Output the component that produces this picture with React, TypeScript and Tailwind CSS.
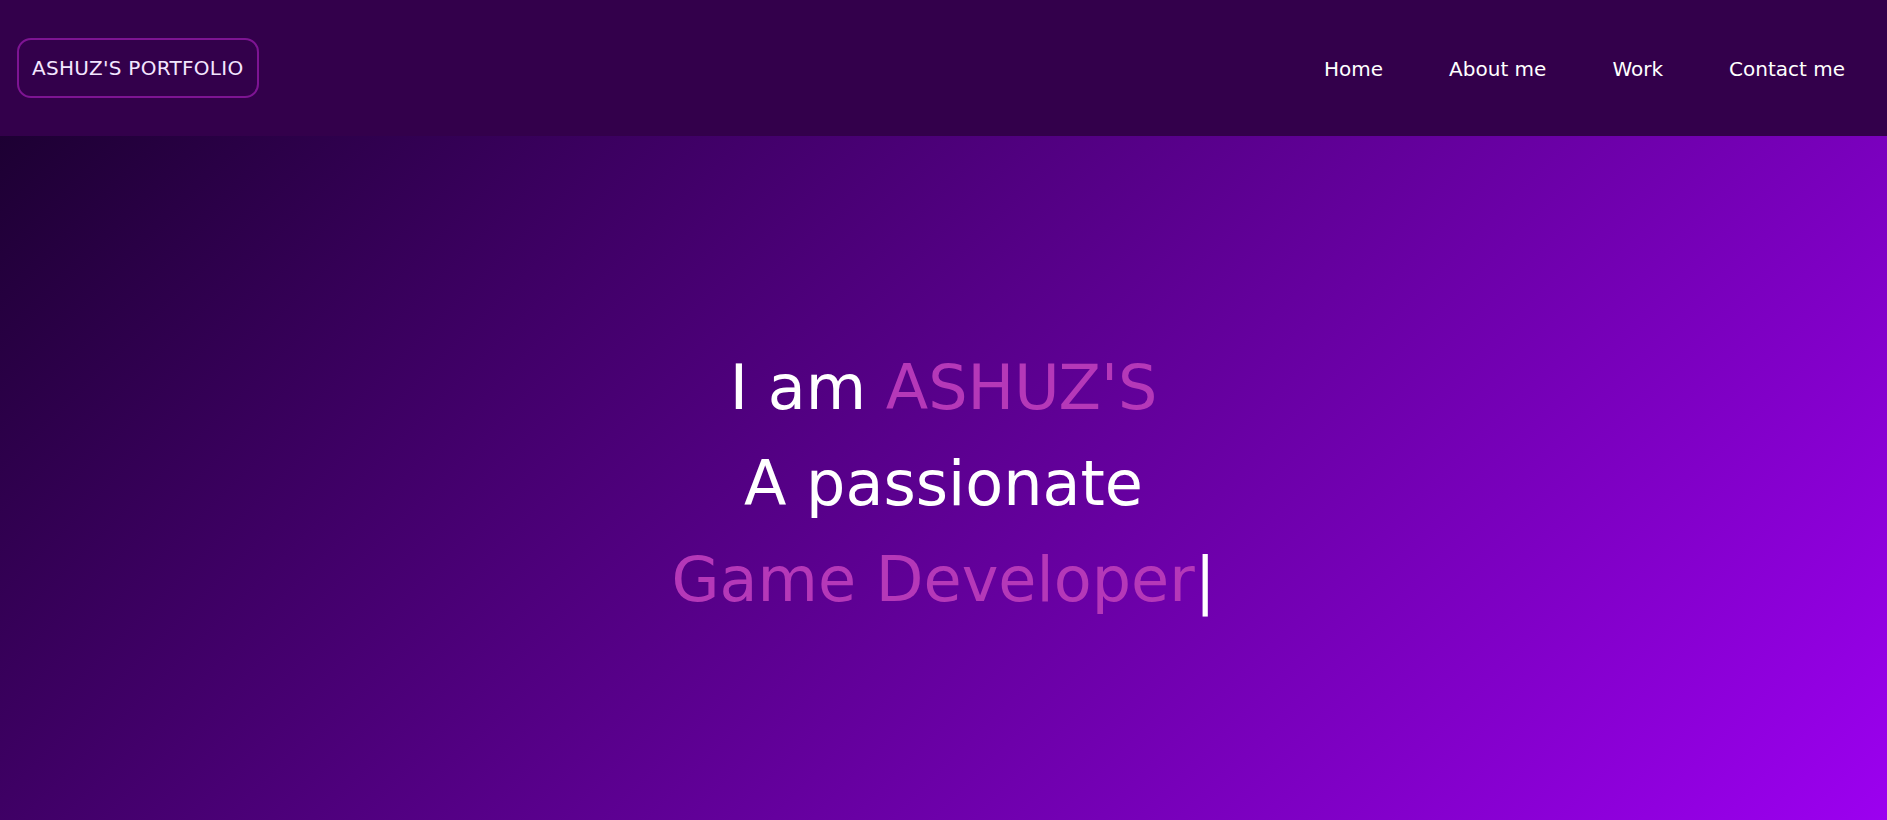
export default function App() {
  return (
    <div className="min-h-screen flex flex-col font-['DejaVu_Sans',Verdana,sans-serif]">
      <header className="h-[136px] bg-[#33004b] flex items-center justify-between pl-[17px] pr-[42px]">
        <div className="h-[60px] px-[13px] flex items-center border-2 border-[#7e1493] rounded-[14px] text-[20px] tracking-[0.3px] text-[#f3e6ff]">
          ASHUZ'S PORTFOLIO
        </div>
        <nav className="flex items-center gap-[66px] text-[20px] text-white pt-[2px]">
          <a href="#">Home</a>
          <a href="#">About me</a>
          <a href="#">Work</a>
          <a href="#">Contact me</a>
        </nav>
      </header>
      <main className="h-[684px] bg-[linear-gradient(135deg,#1d0033,#9c00f0)] flex items-center justify-center">
        <div className="text-center text-[62px] leading-[96px] text-white pt-[12px]">
          <p>I am <span className="text-[#b538b8]">ASHUZ'S</span></p>
          <p>A passionate</p>
          <p>
            <span className="text-[#b538b8]">Game Developer</span>
            <span className="text-white">|</span>
          </p>
        </div>
      </main>
    </div>
  );
}
